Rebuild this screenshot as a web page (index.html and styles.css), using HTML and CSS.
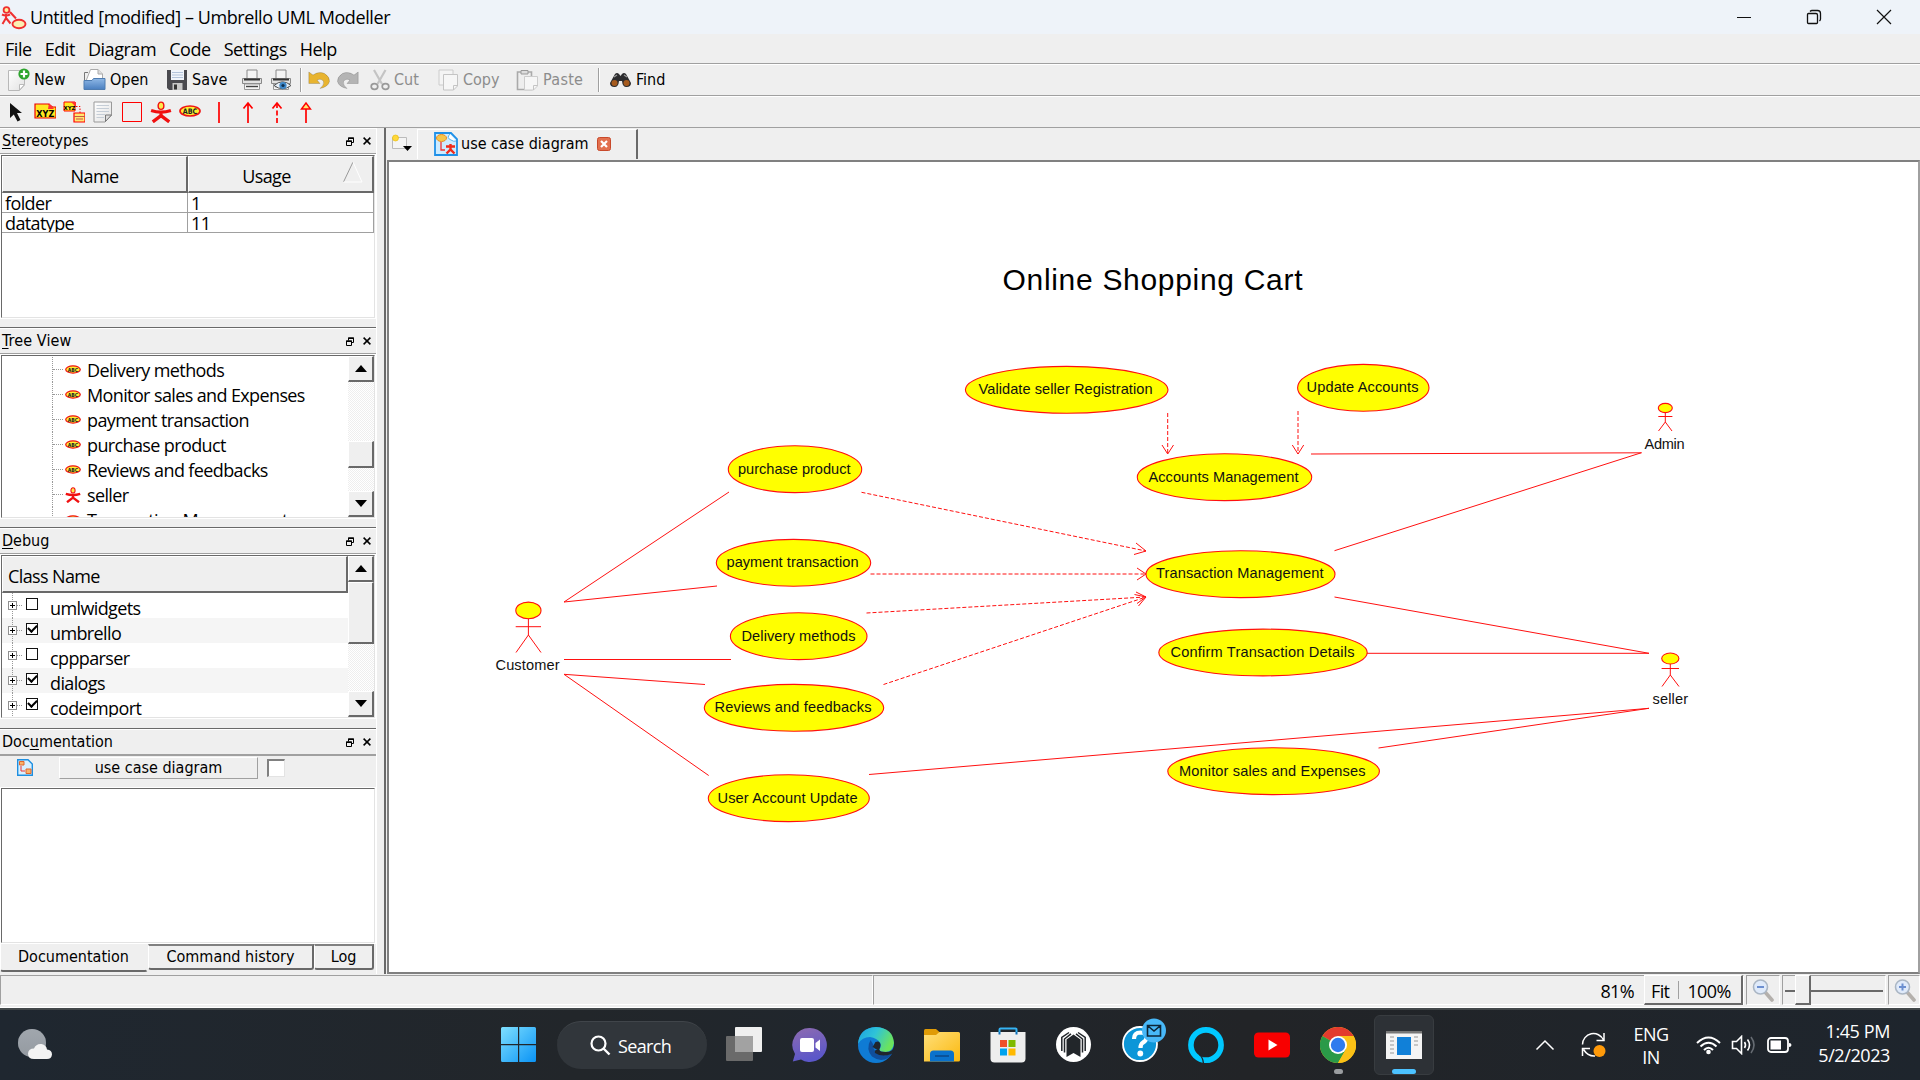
FILE: index.html
```html
<!DOCTYPE html>
<html lang="en">
<head>
<meta charset="utf-8">
<title>Umbrello UML Modeller</title>
<link rel="stylesheet" href="styles.css">
</head>
<body>
<svg width="0" height="0" class="defs">
  <defs>
    <linearGradient id="gWin" x1="0" y1="0" x2="1" y2="1"><stop offset="0" stop-color="#7fe0ff"/><stop offset="1" stop-color="#0a93f5"/></linearGradient>
    <linearGradient id="gChat" x1="0" y1="0" x2=".3" y2="1"><stop offset="0" stop-color="#8e6bb0"/><stop offset="1" stop-color="#5b57c9"/></linearGradient>
    <linearGradient id="gFold" x1="0" y1="0" x2="1" y2="1"><stop offset="0" stop-color="#ffdf7a"/><stop offset="1" stop-color="#fbb90f"/></linearGradient>
    <linearGradient id="gEdge" x1="0" y1="0" x2="1" y2=".4"><stop offset="0" stop-color="#1ba0e2"/><stop offset=".5" stop-color="#2fc3d8"/><stop offset="1" stop-color="#6be35e"/></linearGradient>
    <linearGradient id="gTv" x1="0" y1="0" x2="0" y2="1"><stop offset="0" stop-color="#8a8a8a"/><stop offset="1" stop-color="#5a5a5a"/></linearGradient>
    <linearGradient id="gBlue" x1="0" y1="0" x2="0" y2="1"><stop offset="0" stop-color="#8fb8e6"/><stop offset="1" stop-color="#4a7fc0"/></linearGradient>
    <linearGradient id="gPage" x1="0" y1="0" x2="1" y2="1"><stop offset="0" stop-color="#fff"/><stop offset="1" stop-color="#e2e2e2"/></linearGradient>
    <symbol id="usecase" viewBox="0 0 22 12"><ellipse cx="11" cy="6" rx="10" ry="5" fill="#ffef30" stroke="#f01414" stroke-width="1.700"/><text x="11" y="8.900" font-size="7.600" font-weight="700" text-anchor="middle" textLength="14.500" lengthAdjust="spacingAndGlyphs" fill="#222" font-family="DejaVu Sans">ABC</text></symbol>
    <symbol id="actor" viewBox="0 0 20 20"><path d="M1 8.600Q10 11.500 19 8.600M10 9v4M2.500 19L10 13.300 17.500 19" fill="none" stroke="#f01010" stroke-width="3"/><ellipse cx="10" cy="4.300" rx="2.600" ry="3.300" fill="#ffe94a" stroke="#f01010" stroke-width="1.300"/></symbol>
    <symbol id="float" viewBox="0 0 8 9"><path d="M2.500 1H7.500V5.500H6M.5 4H5.500V8.500H.5ZM2.500 1V3.500" fill="none" stroke="#000"/><path d="M2 1.200H8M0 4.200H6" stroke="#000" stroke-width="1.600"/></symbol>
    <symbol id="cross" viewBox="0 0 8 8"><path d="M.6.6L7.400 7.400M7.400.6L.6 7.400" stroke="#000" stroke-width="1.500"/></symbol>
    <symbol id="mag" viewBox="0 0 22 24"><path d="M13 14L20 22" stroke="#b4b0ac" stroke-width="3.600" stroke-linecap="round"/><circle cx="8.500" cy="9" r="7" fill="#dfeafa" stroke="#aab6c4" stroke-width="1.600"/></symbol>
    <symbol id="printer" viewBox="0 0 22 22"><path d="M6 10V1H16V10Z" fill="#f4f4f4" stroke="#888"/><path d="M1.500 9.500H20.500V14.500H1.500Z" fill="#e2e2e2" stroke="#888"/><path d="M3 9.500H19V11.500H3Z" fill="#333"/><path d="M3.500 15H18.500V20.500H3.500Z" fill="#f4f4f4" stroke="#999"/><path d="M5 17.500H17" stroke="#444" stroke-width="1.400"/></symbol>
    <symbol id="undo" viewBox="0 0 22 18"><path d="M5 4Q11 0 16.500 2.500Q22 6 21.500 10.500Q20 16 12 17.500Q16.500 14 15.500 10.500Q13.500 7 9 9L12 12.500H.8V1Z" fill="currentColor" stroke="#0003" stroke-width=".8"/></symbol>
  </defs>
</svg>
<div class="screen">
  <header class="titlebar">
    <svg class="app-icon" width="26" height="26" viewBox="0 0 26 26"><path d="M5 9v5M1 9.500Q5 11.500 9 9.500M5 13L1.500 19M5 13L9.500 18.500M9 7L15 13.500" fill="none" stroke="#f03030" stroke-width="2"/><circle cx="5.500" cy="5" r="2.900" fill="#fff0a0" stroke="#f03030" stroke-width="1.800"/><ellipse cx="18" cy="19" rx="6.500" ry="4.300" fill="#fbf0b4" stroke="#f03030" stroke-width="1.900"/></svg>
    <span class="title">Untitled [modified] – Umbrello UML Modeller</span>
    <div class="winbtns">
      <svg width="16" height="16"><path d="M1 8.500H15" stroke="#111"/></svg>
      <svg width="16" height="16"><path d="M1.500 5.500Q1.500 4.500 2.500 4.500H10Q11.500 4.500 11.500 6V13.500Q11.500 14.500 10.500 14.500H2.500Q1.500 14.500 1.500 13.500ZM4 2.500Q5 1.500 6 1.500H11.500Q14.500 1.500 14.500 4.500V10Q14.500 11 13.500 12" fill="none" stroke="#111" stroke-width="1.300"/></svg>
      <svg width="16" height="16"><path d="M1 1L15 15M15 1L1 15" stroke="#111" stroke-width="1.200"/></svg>
    </div>
  </header>
  <nav class="menubar"><span>File</span><span>Edit</span><span>Diagram</span><span>Code</span><span>Settings</span><span>Help</span></nav>
  <div class="toolbar main-tools">
    <div class="tool t-new"><svg width="23" height="23"><path d="M1.500 2.500H17.500V17L12.500 22.500H1.500Z" fill="url(#gPage)" stroke="#b8b8b8"/><path d="M17.500 16.500H12.500V22Z" fill="#fff" stroke="#bbb"/><circle cx="17" cy="6" r="5.600" fill="#2ea52e"/><path d="M17 2.500v7M13.500 6h7" stroke="#fff" stroke-width="2.200"/></svg><span>New</span></div>
    <div class="tool t-open"><svg width="23" height="23"><path d="M1.500 19V4.500H5" fill="none" stroke="#777"/><path d="M3 13L7.500 1.500H15L19.500 6V14H3Z" fill="#fff" stroke="#aaa"/><path d="M15 1.500V6H19.500" fill="#ddd" stroke="#aaa"/><path d="M1 21.500V12.500H9L10.500 10.500H22V21.500Z" fill="url(#gBlue)" stroke="#4f7cb0"/></svg><span>Open</span></div>
    <div class="tool t-save"><svg width="22" height="22"><path d="M1 1H21V21H3L1 19Z" fill="#4a4a4f"/><path d="M5 1H18V11H5Z" fill="#f1f5fb"/><path d="M6 3.500H17M6 6H17M6 8.500H17" stroke="#b3c3da"/><path d="M6.500 14H16.500V21H6.500Z" fill="#c8c8c8"/><path d="M8 15.500H11V20.500H8Z" fill="#333"/></svg><span>Save</span></div>
    <svg class="t-print" width="22" height="22"><use href="#printer"/></svg>
    <svg class="t-preview" width="22" height="22"><use href="#printer"/><path d="M4 16.500Q12.500 9 21 16.500Q12.500 23 4 16.500Z" fill="#e6eef6" stroke="#555"/><circle cx="13" cy="16.500" r="3.600" fill="#3d87c8"/><circle cx="13" cy="16.500" r="1.600" fill="#103050"/></svg>
    <i class="vsep"></i>
    <svg class="t-undo" width="22" height="18"><use href="#undo"/></svg>
    <svg class="t-redo" width="22" height="18"><g transform="matrix(-1 0 0 1 22 0)"><use href="#undo"/></g></svg>
    <div class="tool off t-cut"><svg width="20" height="22"><path d="M4 1L12 15M15.500 1L7.500 15" stroke="#c4c4c4" stroke-width="2.200"/><ellipse cx="4.500" cy="17.500" rx="3.300" ry="2.800" fill="none" stroke="#999" stroke-width="1.700"/><ellipse cx="15.500" cy="17.500" rx="3.300" ry="2.800" fill="none" stroke="#999" stroke-width="1.700"/></svg><span>Cut</span></div>
    <div class="tool off t-copy"><svg width="21" height="22"><path d="M1 1H15V16H1Z" fill="#f4f4f4" stroke="#ccc"/><path d="M5.500 5.500H19.500V17L15.500 21H5.500Z" fill="#f6f6f6" stroke="#c4c4c4"/><path d="M19.500 16.500H15.500V21" fill="none" stroke="#c4c4c4"/></svg><span>Copy</span></div>
    <div class="tool off t-paste"><svg width="23" height="22"><path d="M1.500 3H15.500V20.500H1.500Z" fill="#eee" stroke="#aaa" stroke-width="1.600"/><path d="M5 1.500H12V5H5Z" fill="#ddd" stroke="#999"/><path d="M8.500 7.500H21.500V17L17.500 21H8.500Z" fill="#f6f6f6" stroke="#ccc"/><path d="M21.500 16.500H17.500V21" fill="none" stroke="#c4c4c4"/></svg><span>Paste</span></div>
    <i class="vsep"></i>
    <div class="tool t-find"><svg width="23" height="18"><path d="M1 12L6 3Q8 1 10 3L11.500 5 13 3Q15 1 17 3L22 12Q22 16 17.500 16Q13.500 16 13 10H10Q9.500 16 5.500 16Q1 16 1 12Z" fill="#2c2c2e"/><circle cx="5.500" cy="12" r="3" fill="#a65b1e"/><circle cx="17.500" cy="12" r="3" fill="#a65b1e"/><path d="M5 6L8 4M15 4L18 6" stroke="#999" stroke-width="1.200"/></svg><span>Find</span></div>
  </div>
  <div class="toolbar draw-tools">
    <svg width="22" height="22"><path d="M5 2V17L8.800 13.500L12.500 20.500L15.500 19L12 12H17Z" fill="#111"/></svg>
    <svg width="22" height="22"><path d="M1 3H14.500L18.500 6H22V17H1Z" fill="#ffe822" stroke="#e00" stroke-width="1.200"/><path d="M15 2L20 8H14Z" fill="#f33"/><text x="11.300" y="15.500" font-size="8.500" font-weight="700" text-anchor="middle" textLength="18" lengthAdjust="spacingAndGlyphs" font-family="DejaVu Sans">XYZ</text></svg>
    <svg width="22" height="22"><path d="M1 1H12V10H1Z" fill="#ffe822" stroke="#f00"/><path d="M8 1H13V6Z" fill="#f33"/><text x="6.500" y="8.800" font-size="5.500" font-weight="700" text-anchor="middle" font-family="DejaVu Sans">XYZ</text><path d="M13 5.500H17V12" fill="none" stroke="#f00" stroke-dasharray="1.500 1.500"/><path d="M11 12H22V21H11Z" fill="#ffe870" stroke="#f00" stroke-width="1.200"/><path d="M11 15.500H22M13 18H20" stroke="#c54"/></svg>
    <svg width="22" height="22"><path d="M2 1H19.500V14L13 21H2Z" fill="url(#gPage)" stroke="#999"/><path d="M4.500 4.500H17M4.500 7.500H17M4.500 10.500H17M4.500 13.500H13M4.500 16.500H12" stroke="#c5cdd6"/><path d="M19.500 14H13.500V20.500Z" fill="#ddd" stroke="#777"/></svg>
    <svg width="22" height="22"><path d="M1.500 1.500H20.500V20.500H1.500Z" fill="none" stroke="#f00"/></svg>
    <svg width="22" height="22"><use href="#actor"/></svg>
    <svg width="22" height="22"><use href="#usecase" y="-1"/></svg>
    <svg width="22" height="22"><path d="M11 1V22" stroke="#f00" stroke-width="1.700"/></svg>
    <svg width="22" height="22"><path d="M11 2V22M6.500 7.500L11 2L15.500 7.500" fill="none" stroke="#f00" stroke-width="1.700"/></svg>
    <svg width="22" height="22"><path d="M11 2V22" stroke="#f00" stroke-width="1.700" stroke-dasharray="5 2.500"/><path d="M6.500 7.500L11 2L15.500 7.500" fill="none" stroke="#f00" stroke-width="1.700"/></svg>
    <svg width="22" height="22"><path d="M11 8V22" stroke="#f00" stroke-width="1.700"/><path d="M6.500 8L11 2L15.500 8Z" fill="#ffe870" stroke="#f00" stroke-width="1.400"/></svg>
  </div>

  <main class="work">
    <aside class="docks">
      <section class="dock">
        <h2><span><u>S</u>tereotypes</span><svg class="fl" width="8" height="9"><use href="#float"/></svg><svg width="8" height="8"><use href="#cross"/></svg></h2>
        <div class="sunken table">
          <div class="th"><span>Name</span></div><div class="th sorted"><span>Usage</span><svg width="20" height="22"><path d="M.5 21L10 1" stroke="#999"/><path d="M10 1L19 21H.5" fill="none" stroke="#fff"/></svg></div>
          <div class="td">folder</div><div class="td">1</div>
          <div class="td">datatype</div><div class="td">11</div>
        </div>
      </section>
      <section class="dock">
        <h2 class="wide"><span><u>T</u>ree View</span><svg class="fl" width="8" height="9"><use href="#float"/></svg><svg width="8" height="8"><use href="#cross"/></svg></h2>
        <div class="sunken split">
          <ul class="tree">
            <li><svg width="16" height="11"><use href="#usecase"/></svg><span>Delivery methods</span></li>
            <li><svg width="16" height="11"><use href="#usecase"/></svg><span>Monitor sales and Expenses</span></li>
            <li><svg width="16" height="11"><use href="#usecase"/></svg><span>payment transaction</span></li>
            <li><svg width="16" height="11"><use href="#usecase"/></svg><span>purchase product</span></li>
            <li><svg width="16" height="11"><use href="#usecase"/></svg><span>Reviews and feedbacks</span></li>
            <li><svg width="16" height="16"><use href="#actor"/></svg><span>seller</span></li>
            <li><svg width="16" height="11"><use href="#usecase"/></svg><span>Transaction Management</span></li>
          </ul>
          <div class="scroll"><b class="up"></b><i class="thumb mid"></i><b class="down"></b></div>
        </div>
      </section>
      <section class="dock debug">
        <h2><span><u>D</u>ebug</span><svg class="fl" width="8" height="9"><use href="#float"/></svg><svg width="8" height="8"><use href="#cross"/></svg></h2>
        <div class="sunken split">
          <div class="classes">
            <div class="th left"><span>Class Name</span></div>
            <ul class="checks">
              <li><i class="plus"></i><i class="box"></i><span>umlwidgets</span></li>
              <li><i class="plus"></i><i class="box on"></i><span>umbrello</span></li>
              <li><i class="plus"></i><i class="box"></i><span>cppparser</span></li>
              <li><i class="plus"></i><i class="box on"></i><span>dialogs</span></li>
              <li><i class="plus"></i><i class="box on"></i><span>codeimport</span></li>
            </ul>
          </div>
          <div class="scroll"><b class="up"></b><i class="thumb tall"></i><b class="down"></b></div>
        </div>
      </section>
      <section class="dock doc">
        <h2><span>Doc<u>u</u>mentation</span><svg class="fl" width="8" height="9"><use href="#float"/></svg><svg width="8" height="8"><use href="#cross"/></svg></h2>
        <div class="docrow">
          <svg width="16" height="17"><path d="M.7.7H11L15.300 5V16.300H.7Z" fill="#d8f0ff" stroke="#1e8fe0" stroke-width="1.400"/><path d="M2.500 2.500H7V6H2.500ZM9 10H14V14.500H9Z" fill="#f9b36a" stroke="#e0662a"/><path d="M4 7V12H8" fill="none" stroke="#e33"/></svg>
          <div class="docname"><span>use case diagram</span></div>
          <i class="docbox"></i>
        </div>
        <div class="sunken docedit"></div>
        <div class="docktabs"><span class="active">Documentation</span><span>Command history</span><span>Log</span></div>
      </section>
    </aside>

    <section class="editor">
      <div class="tabstrip">
        <svg class="newtab" width="22" height="18"><path d="M1.500 3.500H15.500V14.500H1.500Z" fill="#f4f4f4" stroke="#bbb"/><circle cx="4.500" cy="4" r="3" fill="#ffd83a" stroke="#e6b800" stroke-width=".6"/><path d="M12 12H21L16.500 17Z" fill="#000"/></svg>
        <div class="tab">
          <svg width="24" height="24"><path d="M1 1H17L23 7V23H1Z" fill="#cdebff" stroke="#1e90e8" stroke-width="1.800"/><path d="M16 2Q12 6 17 8Q20 10 22 9" fill="#fff" stroke="#58b4f0"/><ellipse cx="7.500" cy="6" rx="5" ry="3.500" fill="#f6c64a" stroke="#e88a20"/><path d="M7 10V18H11" fill="none" stroke="#e33" stroke-width="1.300"/><path d="M12 14.500H21M16.500 12V18M12.500 21.500L16.500 17.500L20.500 21.500" stroke="#f02a1a" stroke-width="2.400" fill="none"/></svg>
          <span>use case diagram</span>
          <svg width="14" height="14"><rect x=".5" y=".5" width="13" height="13" rx="2" fill="#e2704e" stroke="#c8492a"/><path d="M4 4L10 10M10 4L4 10" stroke="#fff" stroke-width="2.200"/></svg>
        </div>
      </div>
      <div class="canvas">
        <svg class="diagram" viewBox="389 163 1528 807" width="1528" height="807">
          <path class="assoc" d="M564 602L729 492M564 602L717 586M564 659.500H731M564 674.300L705 684.500M564 674.300L708.700 775.500M869 774.500L1649 708.300M1378.500 748L1649 708.300M1367 653.300H1649M1334.500 597L1649 653.300M1334.500 550.700L1641.500 452.700M1311 454L1641.500 452.800"/>
          <path class="dep" d="M861.500 492.300L1146 551M870.500 574H1146M866.500 613L1146 597M883.500 684.500L1146 597M1167.700 413V454M1298 411V454"/>
          <path class="heads" d="M1136 543L1146 551L1134 554.500M1137 568L1146 574L1137 580M1136 592L1146 597L1137 603.500M1134.500 594.500L1146 597L1138.500 606M1162 445L1167.700 454L1173.500 445M1292.300 445L1298 454L1303.700 445"/>
          <g class="cases">
            <ellipse cx="795" cy="469.200" rx="66.700" ry="23.400"/><ellipse cx="793.500" cy="562.800" rx="77.200" ry="23.400"/><ellipse cx="798.700" cy="636.200" rx="68.300" ry="23.400"/><ellipse cx="794" cy="707.800" rx="89.700" ry="23.400"/><ellipse cx="788.800" cy="798.200" rx="80.500" ry="23.400"/><ellipse cx="1066.700" cy="389.800" rx="101.300" ry="23.400"/><ellipse cx="1363.300" cy="387.800" rx="65.700" ry="23.400"/><ellipse cx="1224.500" cy="477.200" rx="87.200" ry="23.400"/><ellipse cx="1240.500" cy="574.200" rx="94.500" ry="23.400"/><ellipse cx="1263" cy="652.500" rx="104.200" ry="23.400"/><ellipse cx="1273.600" cy="771.200" rx="105.800" ry="23.400"/>
            <ellipse cx="528.400" cy="610.400" rx="12.600" ry="8.300"/><ellipse cx="1665.300" cy="408" rx="7" ry="4.600"/><ellipse cx="1670.300" cy="658.500" rx="8.600" ry="5.500"/>
          </g>
          <path class="limbs" d="M528.400 618.700V635L516 652.500M528.400 635L541 652.500M515.700 626.700H541M1665.300 412.700V422L1658.500 431M1665.300 422L1672 431M1658.300 416.500H1672.400M1670.300 664V675L1662 686.500M1670.300 675L1679 686.500M1661.600 668.500H1679"/>
          <g class="labels">
            <text x="738" y="474" textLength="112.500">purchase product</text>
            <text x="726.500" y="567" textLength="132">payment transaction</text>
            <text x="741.500" y="641" textLength="114">Delivery methods</text>
            <text x="714.500" y="712" textLength="157">Reviews and feedbacks</text>
            <text x="717.500" y="803" textLength="140">User Account Update</text>
            <text x="978.500" y="394" textLength="174">Validate seller Registration</text>
            <text x="1306.500" y="392" textLength="112">Update Accounts</text>
            <text x="1148.500" y="482" textLength="150">Accounts Management</text>
            <text x="1156" y="578" textLength="167.500">Transaction Management</text>
            <text x="1170.500" y="657" textLength="184">Confirm Transaction Details</text>
            <text x="1179" y="776" textLength="186.500">Monitor sales and Expenses</text>
            <text x="495.500" y="670" textLength="64">Customer</text>
            <text x="1644.500" y="449" textLength="40">Admin</text>
            <text x="1652.500" y="704" textLength="35.500">seller</text>
          </g>
          <text class="heading" x="1002.500" y="290" textLength="300">Online Shopping Cart</text>
        </svg>
      </div>
    </section>
  </main>

  <footer class="status">
    <div class="cell grow1"></div>
    <div class="cell grow2"><span>81%</span><div class="zoombtns"><span>Fit</span><i></i><span>100%</span></div></div>
    <div class="cell zc"><svg width="22" height="24"><use href="#mag"/><path d="M5 9H12" stroke="#6c8fd0" stroke-width="2"/></svg></div>
    <div class="cell sl"><i class="knob"></i></div>
    <div class="cell zc last"><svg width="22" height="24"><use href="#mag"/><path d="M5 9H12M8.500 5.500V12.500" stroke="#6c8fd0" stroke-width="2"/></svg></div>
  </footer>

  <div class="taskbar">
    <svg class="weather" width="36" height="34"><circle cx="15" cy="15" r="14" fill="#a8b0b9"/><circle cx="15" cy="15" r="14" fill="url(#gTv)" opacity=".25"/><path d="M17 31Q11 31 11 25.500Q11.500 20.500 17 20.500Q19 15.500 24.500 16Q29.500 17 30 21.500Q35 22 35 26.500Q34.500 31 30 31Z" fill="#f3f3f3"/></svg>
    <div class="apps">
      <svg class="win" width="36" height="36"><path d="M0 1.500Q0 0 1.500 0H17V17H0ZM18.200 0H33.500Q35 0 35 1.500V17H18.200ZM0 18.200H17V35H1.500Q0 35 0 33.500ZM18.200 18.200H35V33.500Q35 35 33.500 35H18.200Z" fill="url(#gWin)"/></svg>
      <div class="search"><svg width="21" height="21"><circle cx="8.500" cy="8.500" r="7" fill="none" stroke="#fff" stroke-width="2.200"/><path d="M13.500 13.500L19.500 19.500" stroke="#fff" stroke-width="2.400"/></svg><span>Search</span></div>
      <svg width="36" height="36"><rect x="9" y="0" width="27" height="25" rx="1" fill="#efefef"/><rect x="0" y="9" width="27" height="25" rx="1" fill="#6a6a6a"/><rect x="9" y="9" width="18" height="16" fill="#a2a2a2"/></svg>
      <svg width="36" height="36"><path d="M18 1A17 17 0 1 1 9 32.500L.8 34.500 3 27A17 17 0 0 1 18 1Z" fill="url(#gChat)"/><rect x="8" y="11" width="14" height="14" rx="2" fill="#fff"/><path d="M23.500 16L28 12.500V24L23.500 20.500Z" fill="#fff"/></svg>
      <svg width="36" height="36"><circle cx="18" cy="18" r="18" fill="#0f7bd4"/><path d="M0 17Q1 1 18 0Q35 1 36 16Q35 25 27 25Q21 25 21.500 22Q24 19 22 15.500Q19 11 12 10Q4 10 0 17Z" fill="url(#gEdge)"/><path d="M12.500 13Q7.500 22 14 29.500Q22 35.500 30 31Q33 29 34 26.500Q27 30 20 26.500Q14.500 23 15 17Z" fill="#104f9c"/><path d="M36 19Q35 25 28 25Q21 25 21.500 22.500Q16 22 17 26Q24 30.500 33.500 27L37 23Z" fill="#20262d"/><path d="M17.500 15Q22 13 22.500 18Q22.500 21 20.500 23.500Q16 21 14.500 20Z" fill="#20262d"/></svg>
      <svg width="36" height="36"><path d="M0 3.500Q0 2 1.500 2H12L15.500 5V10H0Z" fill="#e09b06"/><path d="M0 8H12L15.500 5H34.500Q36 5 36 6.500V33Q36 34.500 34.500 34.500H0Z" fill="url(#gFold)"/><path d="M6 34.500V27Q6 23.500 9.500 23.500H26.500Q30 23.500 30 27V34.500Z" fill="#0a72cc"/><path d="M11 29H25" stroke="#0b4f94" stroke-width="1.800"/></svg>
      <svg width="36" height="36"><path d="M9.500 8V2.500Q9.500 1.500 10.500 1.500H25.500Q26.500 1.500 26.500 2.500V8" fill="none" stroke="#35b4f4" stroke-width="2"/><path d="M.5 5H35.500V31.500Q35.500 35.500 31.500 35.500H4.500Q.5 35.500 .5 31.500Z" fill="#eee"/><path d="M10 13h7v7h-7z" fill="#f0512a"/><path d="M18.500 13h7v7h-7z" fill="#7fba00"/><path d="M10 21.500h7v7h-7z" fill="#00a3ee"/><path d="M18.500 21.500h7v7h-7z" fill="#ffb900"/><path d="M9.500 5V7.500M26.500 5V7.500" stroke="#0d6fb8" stroke-width="2"/></svg>
      <svg width="36" height="36"><circle cx="17.500" cy="17.500" r="17.500" fill="#fff"/><path d="M5.800 24V10.500L13 5.500M29.200 24V10.500L22 5.500" fill="none" stroke="#22262a" stroke-width="1.500"/><path d="M8.500 25.500V12L15 6.800M26.500 25.500V12L20 6.800" fill="none" stroke="#22262a" stroke-width="1.500"/><path d="M10.500 12.500L17.500 7.500L24.500 12.500V30L17.500 26L10.500 30Z" fill="#22262a"/></svg>
      <svg class="ask" width="44" height="44"><circle cx="18" cy="26" r="17" fill="#0c96d8" stroke="#fff" stroke-width="1.800"/><path d="M12 21Q12 14.500 18.500 14.500Q25 15 24.500 20Q24 23 21 24.500Q18.500 26 18.500 30" fill="none" stroke="#fff" stroke-width="4.200"/><circle cx="18.300" cy="35.500" r="2.900" fill="#fff"/><circle cx="32" cy="12.500" r="12" fill="#48b8f8"/><path d="M25.500 7.500H38.500V18H25.500ZM26 8L32 13L38 8" fill="none" stroke="#0d2536" stroke-width="1.600"/></svg>
      <svg width="36" height="36"><circle cx="18" cy="18" r="15.100" fill="none" stroke="#00c8ff" stroke-width="5.600"/><path d="M11.500 28Q15 30 15.500 37" fill="none" stroke="#20242a" stroke-width="1.300"/><path d="M16 33Q22 33 27 27L29 30L22 35.500L16 35.800Z" fill="#00c8ff"/></svg>
      <svg width="36" height="36"><rect x="0" y="5.500" width="36" height="25" rx="4.500" fill="#f80000"/><path d="M14.500 12.500L23.500 18L14.500 23.500Z" fill="#fff"/></svg>
      <div class="opened"><svg width="36" height="36"><circle cx="18" cy="18" r="18" fill="#fbc116"/><path d="M18 18L2.400 9A18 18 0 0 1 33.600 9Z" fill="#e33b2e"/><path d="M2.400 9A18 18 0 0 0 18 36L25.800 22.500 18 18Z" fill="#2a9a48"/><path d="M18 9H33.600A18 18 0 0 1 18 36L25.800 22.500Z" fill="#fbc116"/><circle cx="18" cy="18" r="9" fill="#fff"/><circle cx="18" cy="18" r="7.200" fill="#2f7bee"/></svg></div>
      <div class="opened running"><svg width="36" height="28"><path d="M0 0H36V28H0Z" fill="#f4f4f4"/><path d="M0 0H36V2.500H0Z" fill="#777"/><path d="M11 6H25V24H11Z" fill="#1180d8"/><path d="M4 6H8M4 10H8M4 14H8M4 18H8M4 22H8M28 6H32M28 10H32M28 14H32" stroke="#c6c6c6" stroke-width="1.800"/></svg></div>
    </div>
    <div class="tray">
      <svg width="20" height="12"><path d="M1.500 10.500L10 2L18.500 10.500" fill="none" stroke="#fff" stroke-width="1.500"/></svg>
      <svg class="sync" width="26" height="26"><path d="M1.500 12.500A11 11 0 0 1 22.500 8M23 1V8.500H15.500M1.500 24V16.500H9M2.500 17.500Q7 24.500 14 24" fill="none" stroke="#fff" stroke-width="1.500"/><circle cx="18.500" cy="19" r="6" fill="#ff9a0a"/></svg>
      <div class="lang"><span>ENG</span><span>IN</span></div>
      <svg class="wifi" width="25" height="19"><path d="M1 7Q12.500 -4 24 7M4.500 10.500Q12.500 3 20.500 10.500M8 14Q12.500 9.500 17 14" fill="none" stroke="#fff" stroke-width="2"/><circle cx="12.500" cy="16" r="2.300" fill="#fff"/></svg>
      <svg class="vol" width="25" height="20"><path d="M1.500 6.500H5.500L10.500 1.500V18.500L5.500 13.500H1.500Z" fill="none" stroke="#fff" stroke-width="1.600"/><path d="M13.500 7Q15.500 10 13.500 13M16.500 4.500Q20.500 10 16.500 15.500" fill="none" stroke="#fff" stroke-width="1.600"/><path d="M20 2Q26 10 20 18" fill="none" stroke="#666c73" stroke-width="1.600"/></svg>
      <svg class="bat" width="25" height="18"><rect x="1" y="2" width="20" height="14" rx="3" fill="none" stroke="#fff" stroke-width="1.800"/><rect x="3.500" y="4.500" width="10.500" height="9" fill="#fff"/><path d="M22 7Q24.500 7 24.500 9Q24.500 11 22 11Z" fill="#fff"/></svg>
      <div class="clock"><span>1:45 PM</span><span>5/2/2023</span></div>
    </div>
  </div>
</div>
</body>
</html>
```
FILE: styles.css
```css
* { box-sizing: border-box; }
html, body { margin: 0; padding: 0; }
body { width: 1920px; height: 1080px; overflow: hidden; background: #efefef; color: #000; font-family: "Open Sans", "Noto Sans", sans-serif; font-size: 18px; line-height: 1; letter-spacing: -.62px; }
svg { display: block; flex: none; letter-spacing: 0; }
.defs { position: absolute; }
.screen { display: flex; flex-direction: column; width: 1920px; height: 1080px; }
i { font-style: normal; }
h2, ul { margin: 0; padding: 0; font-weight: 400; list-style: none; }
span { white-space: nowrap; }

/* title and menus */
.titlebar { display: flex; align-items: center; height: 34px; background: #eef3f9; }
.app-icon { margin: 2px 3px 0 1px; }
.title { letter-spacing: -.41px; }
.winbtns { display: flex; gap: 54px; margin-left: auto; margin-right: 28px; }
.menubar { display: flex; gap: 13px; align-items: center; height: 29px; padding-left: 5px; letter-spacing: -.45px; }

/* toolbars */
.toolbar { display: flex; align-items: center; height: 32px; border-top: 1px solid #a0a0a0; box-shadow: inset 0 1px #fff; font-family: "DejaVu Sans Condensed", "DejaVu Sans", sans-serif; font-size: 16px; letter-spacing: 0; }
.tool { display: flex; align-items: center; gap: 4px; flex: none; }
.off { color: #8c8c8c; }
.vsep { width: 2px; height: 24px; background: #a0a0a0; border-right: 1px solid #fff; }
.main-tools { padding-left: 7px; }
.draw-tools { padding-left: 5px; gap: 7px; border-bottom: 1px solid #a0a0a0; height: 33px; }
.t-new { width: 76px; }
.t-open { width: 83px; }
.t-save { width: 75px; }
.t-preview { margin: 0 8px 0 7px; }
.t-undo { color: #e8b430; margin: 0 7px 0 6px; }
.t-redo { color: #b4b4b4; margin-right: 11px; }
.t-cut { width: 68px; }
.t-copy { width: 78px; }
.t-paste { width: 82px; letter-spacing: .3px; }
.t-find { margin-left: 9px; }

/* docks */
.work { display: flex; height: 846px; }
.docks { width: 377px; border-right: 1px solid #fff; }
.dock { height: 200px; border-bottom: 1px solid #696969; }
.debug { height: 201px; }
.dock h2 { display: flex; align-items: center; height: 27px; padding: 0 5px 0 2px; border-bottom: 2px solid #a0a0a0; border-top: 1px solid #fff; font-family: "DejaVu Sans Condensed", "DejaVu Sans", sans-serif; font-size: 16px; letter-spacing: 0; }
.dock h2.wide { letter-spacing: .1px; }
.dock h2 span { margin-right: auto; }
.dock h2 u { text-underline-offset: 2px; text-decoration-thickness: 1px; }
.fl { margin-right: 9px; }
.sunken { width: 374px; height: 163px; background: #fff; border: 1px solid #e3e3e3; border-top-color: #696969; border-left-color: #696969; box-shadow: 0 0 0 1px #fff, -1px -1px #a0a0a0; margin-left: 1px; overflow: hidden; }
.table { display: grid; grid-template-columns: 186px 186px; grid-template-rows: 37px 20px 20px; }
.th { display: flex; align-items: center; justify-content: center; position: relative; background: #efefef; border: 1px solid #fff; border-right: 2px solid #696969; border-bottom: 2px solid #696969; padding-top: 4px; }
.th svg { position: absolute; right: 9px; top: 4px; }
.th.sorted { padding-right: 28px; }
.th.left { justify-content: flex-start; padding-left: 5px; height: 37px; }
.td { overflow: hidden; border-right: 1px solid #a0a0a0; border-bottom: 1px solid #a0a0a0; padding: 0 0 0 3px; line-height: 20px; }
.split { display: flex; }
.tree { flex: 1; padding: 1px 0 0 50px; overflow: hidden; }
.tree li { display: flex; align-items: center; height: 25px; border-left: 1px dotted #999; }
.tree li::before { content: ""; width: 10px; border-top: 1px dotted #999; margin-right: 2px; }
.tree li span { margin-left: 6px; }
.scroll { display: flex; flex-direction: column; width: 26px; background: repeating-conic-gradient(#fff 0 25%, #eee 0 50%) 0 0 / 2px 2px; }
.scroll b, .thumb, .knob { background: #efefef; border: 1px solid #fff; border-right: 2px solid #696969; border-bottom: 2px solid #696969; }
.scroll b { display: grid; place-items: center; height: 26px; flex: none; }
.scroll b::after { content: ""; border: 6.500px solid transparent; border-top: 0; border-bottom: 7px solid #000; }
.scroll .down { margin-top: auto; }
.scroll .down::after { border-top: 7px solid #000; border-bottom: 0; }
.mid { height: 27px; margin-top: 59px; }
.tall { height: 62px; }
.classes { flex: 1; }
.checks li { display: flex; align-items: center; height: 25px; padding-left: 6px; background: linear-gradient(#999, #999) 10px 0 / 1px 100% no-repeat; }
.checks li { background: repeating-linear-gradient(#999 0 1px, transparent 1px 2px) 10px 0 / 1px 100% no-repeat, repeating-linear-gradient(90deg, #999 0 1px, transparent 1px 2px) 15px 50% / 5px 1px no-repeat; }
.checks li:nth-child(even) { background-color: #f5f5f5; }
.plus { width: 9px; height: 9px; border: 1px solid #909090; background: linear-gradient(#000, #000) 50% 50% / 5px 1px no-repeat, linear-gradient(#000, #000) 50% 50% / 1px 5px no-repeat, #fff; }
.box { width: 12px; height: 12px; border: 1.500px solid #111; background: #fff; margin: -4px 12px 0 9px; display: grid; place-items: center; }
.box.on::after { content: ""; width: 7px; height: 4px; border-left: 2px solid #000; border-bottom: 2px solid #000; transform: rotate(-45deg) translate(1px, -1px); }
.checks span { padding-top: 4px; }
.doc { height: 245px; border: 0; }
.docrow { display: flex; align-items: flex-start; height: 32px; padding: 3px 0 0 17px; font-family: "DejaVu Sans Condensed", "DejaVu Sans", sans-serif; font-size: 16px; letter-spacing: 0; }
.docname { width: 199px; height: 22px; margin: -2px 9px 0 26px; display: grid; place-items: center; border: 1px solid #fff; border-right-color: #a0a0a0; border-bottom-color: #a0a0a0; }
.docbox { width: 18px; height: 18px; background: #fff; border: 1px solid #e3e3e3; border-top: 2px solid #808080; border-left: 2px solid #808080; }
.docedit { height: 155px; }
.docktabs { display: flex; align-items: flex-start; height: 30px; margin-top: 1px; font-family: "DejaVu Sans Condensed", "DejaVu Sans", sans-serif; font-size: 16px; letter-spacing: 0; }
.docktabs span { display: grid; place-items: center; height: 26px; width: 166px; border: 1px solid #696969; border-width: 2px 2px 2px 1px; border-color: #808080 #696969 #696969 #fff; border-radius: 0 0 3px 3px; }
.docktabs .active { width: 148px; height: 28px; border-top: 0; border-right-color: transparent; }
.docktabs span:last-child { width: 60px; }

/* diagram editor */
.editor { flex: 1; margin-left: 7px; border-left: 2px solid #696969; display: flex; flex-direction: column; }
.tabstrip { display: flex; height: 32px; }
.newtab { margin: 6px 0 0 5px; }
.tab { display: flex; align-items: center; height: 30px; width: 221px; margin: 1px 0 0 4px; padding: 0 0 2px 16px; border-left: 1px solid #fff; border-top: 1px solid #fff; border-right: 2px solid #696969; font-family: "DejaVu Sans Condensed", "DejaVu Sans", sans-serif; font-size: 16px; letter-spacing: 0; }
.tab span { margin: 0 8px 0 3px; }
.canvas { flex: 1; background: #fff; border: 2px solid #808080; border-right-color: #a0a0a0; margin-left: 1px; overflow: hidden; }
.diagram { margin-top: 1px; }
.assoc, .dep, .heads, .limbs { fill: none; stroke: #ff1010; stroke-width: 1; }
.dep { stroke-dasharray: 4 2; }
.cases { fill: #ff0; stroke: #ff1010; stroke-width: 1.100; }
.labels, .heading { font-family: "Liberation Sans", Arial, sans-serif; font-size: 14.600px; fill: #111; }
.heading { font-size: 30px; fill: #000; }

/* status bar */
.status { display: flex; height: 34px; padding: 1px 0 2px 0; border-bottom: 1px solid #fff; }
.cell { border: 1px solid #fff; border-left-color: #a0a0a0; border-top-color: #a0a0a0; display: flex; align-items: center; }
.grow1 { width: 873px; }
.grow2 { width: 871px; justify-content: flex-end; }
.grow2 span { padding-top: 2px; }
.zoombtns { display: flex; align-items: center; width: 99px; height: 30px; margin-left: 10px; padding-left: 6px; border: 1px solid #fff; border-right: 2px solid #696969; border-bottom: 2px solid #696969; }
.zoombtns i { width: 1px; height: 18px; background: #a0a0a0; margin: 0 8px 0 9px; }
.zc { width: 34px; margin-left: 2px; justify-content: center; }
.sl { width: 104px; margin-left: 2px; padding-left: 12px; background: linear-gradient(#696969, #696969) 2px 14px / 98px 2px no-repeat; }
.knob { width: 16px; height: 30px; }
.last { flex: 1; padding-left: 2px; }

/* taskbar */
.taskbar { display: flex; align-items: center; height: 72px; border-top: 2px solid #42484a; background: linear-gradient(90deg, #1f2730, #22262a 30%, #20262d 45%, #222427 65%, #1e252d); color: #fff; }
.weather { margin-left: 17px; }
.apps { display: flex; align-items: center; margin-left: 448px; gap: 30px; }
.win { margin-right: -10px; }
.search { display: flex; align-items: center; gap: 7px; width: 150px; height: 48px; padding-left: 33px; margin-right: -11px; border-radius: 24px; background: #31363b; border-top: 1px solid #40454a; }
.ask { margin: -10px -8px 0 0; }
.opened { position: relative; }
.opened::after { content: ""; position: absolute; left: 14px; bottom: -11px; width: 9px; height: 5px; border-radius: 3px; background: #9a9da0; }
.running { display: grid; place-items: center; width: 60px; height: 60px; margin-left: -12px; border-radius: 6px; background: #2d3136; border: 1px solid #383c40; }
.running::after { left: 17px; bottom: 0; width: 24px; background: #4cc2ff; }
.tray { display: flex; align-items: center; margin-left: auto; padding-right: 30px; }
.sync { margin-left: 26px; }
.lang { display: flex; flex-direction: column; align-items: center; gap: 5px; width: 36px; margin-left: 26px; }
.wifi { margin-left: 27px; }
.vol { margin-left: 10px; }
.bat { margin-left: 11px; }
.clock { display: flex; flex-direction: column; align-items: flex-end; gap: 6px; width: 74px; margin-left: 24px; padding-bottom: 5px; letter-spacing: -.4px; }
```
